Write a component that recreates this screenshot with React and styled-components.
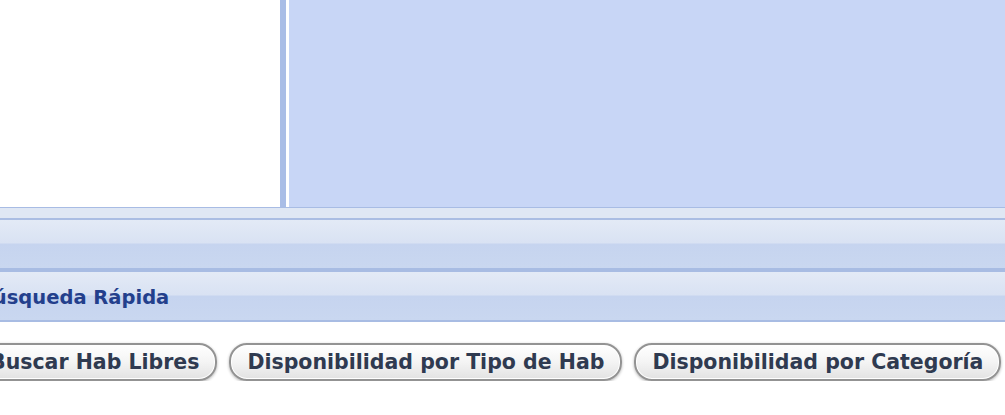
import React from 'react';
import styled, { createGlobalStyle } from 'styled-components';

const GlobalStyle = createGlobalStyle`
  html, body {
    margin: 0;
    padding: 0;
    background: #fff;
    overflow: hidden;
  }
  body {
    font-family: "DejaVu Sans", Verdana, sans-serif;
  }
`;

// the page is scrolled a little to the right, so its left edge is cut off
const Page = styled.div`
  width: 1060px;
  margin-left: -28px;
`;

const TopArea = styled.div`
  display: flex;
  height: 207px;
  border-bottom: 1px solid #a8bce4;
`;

const LeftPane = styled.div`
  width: 308px;
  background: #fff;
`;

const Divider = styled.div`
  width: 6px;
  background: #a9bde6;
  border-right: 3px solid #fff;
`;

const RightPane = styled.div`
  flex: 1;
  background: #c8d6f6;
`;

const Strip = styled.div`
  height: 10px;
  background: #dfe7f4;
  border-bottom: 2px solid #aabde3;
`;

const Bar = styled.div`
  display: flex;
  align-items: center;
  height: 45px;
  padding: 3px 0 0 6px;
  background: linear-gradient(
    #e3eaf6 0%,
    #d9e2f3 48%,
    #c6d4ef 50%,
    #c9d7f0 100%
  );
  border-bottom: ${p => p.$line}px solid #a8bce3;
  color: #233f8c;
  font-size: 19.5px;
  font-weight: bold;
`;

const ButtonRow = styled.div`
  display: flex;
  gap: 12px;
  padding: 21px 0 0 0;
`;

const Button = styled.button`
  height: 38px;
  padding: 0 16px;
  border: 2px solid #939393;
  border-radius: 18px;
  background: linear-gradient(#ffffff 0%, #f4f4f4 50%, #e2e2e2 100%);
  box-shadow: inset 0 0 0 1px #fff, 0 1px 3px rgba(0, 0, 0, 0.3);
  color: #2f3a50;
  font-family: "DejaVu Sans", Verdana, sans-serif;
  font-size: 20.5px;
  font-weight: bold;
  white-space: nowrap;
  cursor: pointer;
`;

export default function App() {
  return (
    <>
      <GlobalStyle />
      <Page>
        <TopArea>
          <LeftPane />
          <Divider />
          <RightPane />
        </TopArea>
        <Strip />
        <Bar $line={4} />
        <Bar $line={2}>Búsqueda Rápida</Bar>
        <ButtonRow>
          <Button>Buscar Hab Libres</Button>
          <Button>Disponibilidad por Tipo de Hab</Button>
          <Button>Disponibilidad por Categoría</Button>
        </ButtonRow>
      </Page>
    </>
  );
}
